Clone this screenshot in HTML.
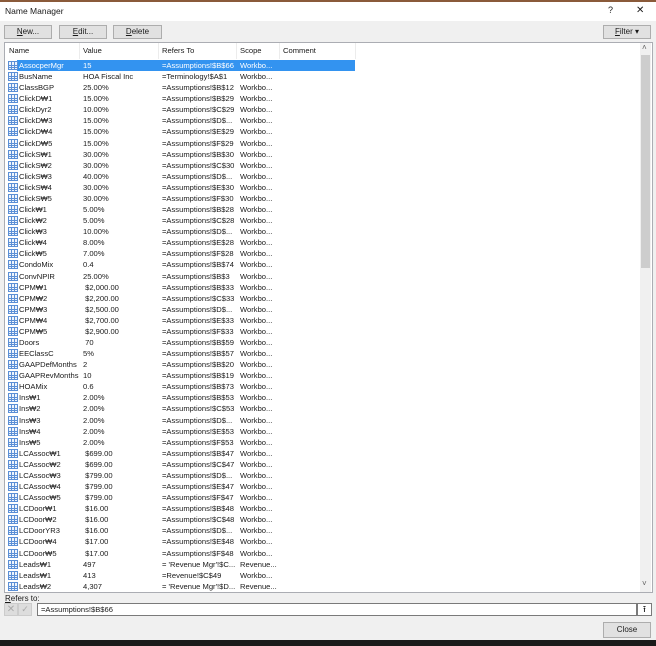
<!DOCTYPE html>
<html><head><meta charset="utf-8"><style>
*{margin:0;padding:0;box-sizing:border-box}
body{width:656px;height:646px;background:#f0f0f0;font-family:"Liberation Sans",sans-serif;font-size:7.6px;color:#1a1a1a;position:relative;overflow:hidden}
.a{position:absolute;white-space:nowrap}
.btn{position:absolute;background:#e1e1e1;border:1px solid #adadad;font-size:8px;text-align:center;line-height:12px}
.row{position:absolute;left:5px;width:350px;height:11px;line-height:11px}
.row span{position:absolute;top:0}
.ic{position:absolute;left:3px;top:1px;width:10px;height:9px;border:1px solid #5b8fd6;background:
linear-gradient(#5b8fd6,#5b8fd6) 0 3px/100% 1px no-repeat,
linear-gradient(#5b8fd6,#5b8fd6) 0 5px/100% 1px no-repeat,
linear-gradient(#5b8fd6,#5b8fd6) 2px 0/1px 100% no-repeat,
linear-gradient(#5b8fd6,#5b8fd6) 5px 0/1px 100% no-repeat,#eef4fc}
.n{left:14px}.v{left:78px}.r{left:157px}.s{left:235px}
.sel .n,.sel .v,.sel .r,.sel .s{color:#fff}
</style></head><body>
<div class="a" style="left:0;top:0;width:656px;height:2px;background:#8a5a3a"></div>
<div class="a" style="left:0;top:2px;width:656px;height:19px;background:#fff"></div>
<div class="a" style="left:5px;top:6px;font-size:8.5px">Name Manager</div>
<div class="a" style="left:608px;top:5px;font-size:9px">?</div>
<div class="a" style="left:636px;top:5px;font-size:10px">✕</div>
<div class="btn" style="left:4px;top:25px;width:48px;height:14px"><u>N</u>ew...</div>
<div class="btn" style="left:59px;top:25px;width:48px;height:14px"><u>E</u>dit...</div>
<div class="btn" style="left:113px;top:25px;width:49px;height:14px"><u>D</u>elete</div>
<div class="btn" style="left:603px;top:25px;width:48px;height:14px"><u>F</u>ilter ▾</div>
<div class="a" style="left:4px;top:42px;width:649px;height:551px;background:#fff;border:1px solid #abadb3"></div>
<div class="a" style="left:9px;top:46px">Name</div>
<div class="a" style="left:83px;top:46px">Value</div>
<div class="a" style="left:162px;top:46px">Refers To</div>
<div class="a" style="left:240px;top:46px">Scope</div>
<div class="a" style="left:283px;top:46px">Comment</div>
<div class="a" style="left:79px;top:43px;width:1px;height:16px;background:#ececec"></div>
<div class="a" style="left:158px;top:43px;width:1px;height:16px;background:#ececec"></div>
<div class="a" style="left:236px;top:43px;width:1px;height:16px;background:#ececec"></div>
<div class="a" style="left:279px;top:43px;width:1px;height:16px;background:#ececec"></div>
<div class="a" style="left:355px;top:43px;width:1px;height:16px;background:#ececec"></div>
<div class="a" style="left:640px;top:43px;width:11px;height:549px;background:#f0f0f0"></div>
<div class="a" style="left:641px;top:55px;width:9px;height:213px;background:#cdcdcd"></div>
<div class="a" style="left:642px;top:43px;font-size:8px;color:#606060">˄</div>
<div class="a" style="left:642px;top:579px;font-size:8px;color:#606060">˅</div>
<div id="list"></div>
<div class="a" style="left:5px;top:594px;font-size:8px"><u>R</u>efers to:</div>
<div class="a" style="left:4px;top:603px;width:14px;height:13px;background:#ddd;border:1px solid #ccc;color:#aaa;font-size:10px;line-height:11px;text-align:center">✕</div>
<div class="a" style="left:18px;top:603px;width:14px;height:13px;background:#ddd;border:1px solid #ccc;color:#aaa;font-size:9px;line-height:11px;text-align:center">✓</div>
<div class="a" style="left:37px;top:603px;width:600px;height:13px;background:#fff;border:1px solid #7a7a7a;padding-left:3px;line-height:11px">=Assumptions!$B$66</div>
<div class="a" style="left:637px;top:603px;width:15px;height:13px;background:#fff;border:1px solid #7a7a7a;font-size:9px;line-height:11px;text-align:center">⭱</div>
<div class="btn" style="left:603px;top:622px;width:48px;height:16px;line-height:14px">Close</div>
<div class="a" style="left:0;top:640px;width:656px;height:6px;background:#1a1a1a"></div>
<script>
var d=[["AssocperMgr","15","=Assumptions!$B$66","Workbo..."],["BusName","HOA Fiscal Inc","=Terminology!$A$1","Workbo..."],["ClassBGP","25.00%","=Assumptions!$B$12","Workbo..."],["ClickD₩1","15.00%","=Assumptions!$B$29","Workbo..."],["ClickDyr2","10.00%","=Assumptions!$C$29","Workbo..."],["ClickD₩3","15.00%","=Assumptions!$D$...","Workbo..."],["ClickD₩4","15.00%","=Assumptions!$E$29","Workbo..."],["ClickD₩5","15.00%","=Assumptions!$F$29","Workbo..."],["ClickS₩1","30.00%","=Assumptions!$B$30","Workbo..."],["ClickS₩2","30.00%","=Assumptions!$C$30","Workbo..."],["ClickS₩3","40.00%","=Assumptions!$D$...","Workbo..."],["ClickS₩4","30.00%","=Assumptions!$E$30","Workbo..."],["ClickS₩5","30.00%","=Assumptions!$F$30","Workbo..."],["Click₩1","5.00%","=Assumptions!$B$28","Workbo..."],["Click₩2","5.00%","=Assumptions!$C$28","Workbo..."],["Click₩3","10.00%","=Assumptions!$D$...","Workbo..."],["Click₩4","8.00%","=Assumptions!$E$28","Workbo..."],["Click₩5","7.00%","=Assumptions!$F$28","Workbo..."],["CondoMix","0.4","=Assumptions!$B$74","Workbo..."],["ConvNPIR","25.00%","=Assumptions!$B$3","Workbo..."],["CPM₩1"," $2,000.00","=Assumptions!$B$33","Workbo..."],["CPM₩2"," $2,200.00","=Assumptions!$C$33","Workbo..."],["CPM₩3"," $2,500.00","=Assumptions!$D$...","Workbo..."],["CPM₩4"," $2,700.00","=Assumptions!$E$33","Workbo..."],["CPM₩5"," $2,900.00","=Assumptions!$F$33","Workbo..."],["Doors"," 70","=Assumptions!$B$59","Workbo..."],["EEClassC","5%","=Assumptions!$B$57","Workbo..."],["GAAPDefMonths","2","=Assumptions!$B$20","Workbo..."],["GAAPRevMonths","10","=Assumptions!$B$19","Workbo..."],["HOAMix","0.6","=Assumptions!$B$73","Workbo..."],["Ins₩1","2.00%","=Assumptions!$B$53","Workbo..."],["Ins₩2","2.00%","=Assumptions!$C$53","Workbo..."],["Ins₩3","2.00%","=Assumptions!$D$...","Workbo..."],["Ins₩4","2.00%","=Assumptions!$E$53","Workbo..."],["Ins₩5","2.00%","=Assumptions!$F$53","Workbo..."],["LCAssoc₩1"," $699.00","=Assumptions!$B$47","Workbo..."],["LCAssoc₩2"," $699.00","=Assumptions!$C$47","Workbo..."],["LCAssoc₩3"," $799.00","=Assumptions!$D$...","Workbo..."],["LCAssoc₩4"," $799.00","=Assumptions!$E$47","Workbo..."],["LCAssoc₩5"," $799.00","=Assumptions!$F$47","Workbo..."],["LCDoor₩1"," $16.00","=Assumptions!$B$48","Workbo..."],["LCDoor₩2"," $16.00","=Assumptions!$C$48","Workbo..."],["LCDoorYR3"," $16.00","=Assumptions!$D$...","Workbo..."],["LCDoor₩4"," $17.00","=Assumptions!$E$48","Workbo..."],["LCDoor₩5"," $17.00","=Assumptions!$F$48","Workbo..."],["Leads₩1","497","= 'Revenue Mgr'!$C...","Revenue..."],["Leads₩1","413","=Revenue!$C$49","Workbo..."],["Leads₩2","4,307","= 'Revenue Mgr'!$D...","Revenue..."]];
var h="";d.forEach(function(r,i){var t=60+i*11.08;h+='<div class="row'+(i==0?' sel':'')+'" style="top:'+t+'px">'+(i==0?'<div style="position:absolute;left:12px;top:0;width:338px;height:11px;background:#3393f0"></div>':'')+'<div class="ic"></div><span class="n">'+r[0]+'</span><span class="v" style="white-space:pre">'+r[1]+'</span><span class="r">'+r[2]+'</span><span class="s">'+r[3]+'</span></div>'});
document.getElementById("list").innerHTML=h;
</script>
</body></html>
